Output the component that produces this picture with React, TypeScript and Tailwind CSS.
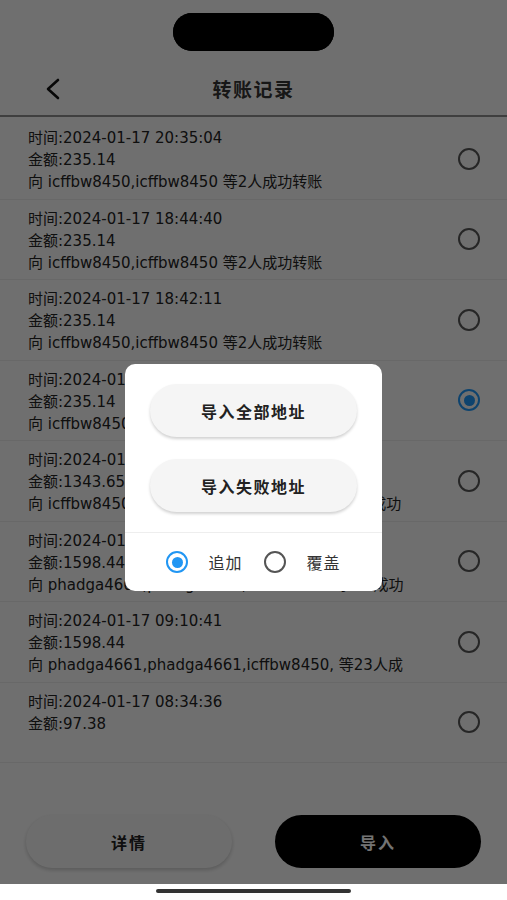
const FONT = "font-['DejaVu_Sans','Noto_Sans_CJK_SC',sans-serif]";
const CJK = "font-['Noto_Sans_CJK_SC',sans-serif]";

type Record = {
  time: string;
  amount: string;
  target?: string;
  selected?: boolean;
};

const RECORDS: Record[] = [
  { time: "2024-01-17 20:35:04", amount: "235.14", target: "向 icffbw8450,icffbw8450 等2人成功转账" },
  { time: "2024-01-17 18:44:40", amount: "235.14", target: "向 icffbw8450,icffbw8450 等2人成功转账" },
  { time: "2024-01-17 18:42:11", amount: "235.14", target: "向 icffbw8450,icffbw8450 等2人成功转账" },
  { time: "2024-01-17 16:20:35", amount: "235.14", target: "向 icffbw8450,icffbw8450 等2人成功转账", selected: true },
  { time: "2024-01-17 12:05:18", amount: "1343.65", target: "向 icffbw8450,phadga4661,icffbw8450 等12人成功转账" },
  { time: "2024-01-17 10:31:52", amount: "1598.44", target: "向 phadga4661,phadga4661,icffbw8450 等9人成功转账" },
  { time: "2024-01-17 09:10:41", amount: "1598.44", target: "向 phadga4661,phadga4661,icffbw8450, 等23人成功转账" },
  { time: "2024-01-17 08:34:36", amount: "97.38" },
];

function Radio({ checked }: { checked?: boolean }) {
  if (checked) {
    return (
      <span className="flex h-[22px] w-[22px] items-center justify-center rounded-full border-[2.5px] border-[#2196f3]">
        <span className="h-[11px] w-[11px] rounded-full bg-[#2196f3]" />
      </span>
    );
  }
  return <span className="h-[22px] w-[22px] rounded-full border-2 border-[#555]" />;
}

function RecordRow({ record }: { record: Record }) {
  return (
    <div className="flex h-[80.5px] items-center border-b border-[#e6e6e6] pl-[28px] pr-[27px]">
      <div className="flex h-full w-[384px] flex-col pt-[8px] text-[15px] leading-[22px] text-[#222]">
        <p>时间:{record.time}</p>
        <p>金额:{record.amount}</p>
        {record.target && <p className="h-[22px] overflow-hidden break-all">{record.target}</p>}
      </div>
      <div className="ml-auto flex">
        <Radio checked={record.selected} />
      </div>
    </div>
  );
}

function ImportDialog() {
  return (
    <div className={`absolute left-[125px] top-[364px] w-[257px] overflow-hidden rounded-[10px] bg-white ${CJK}`}>
      <div className="flex flex-col gap-[22px] px-[25px] pb-[20px] pt-[20px]">
        <button className="h-[53px] rounded-full bg-[#f5f5f5] text-[16px] font-bold tracking-[1.5px] text-[#222] shadow-[0_2px_3px_rgba(0,0,0,0.18)]">
          导入全部地址
        </button>
        <button className="h-[53px] rounded-full bg-[#f5f5f5] text-[16px] font-bold tracking-[1.5px] text-[#222] shadow-[0_2px_3px_rgba(0,0,0,0.18)]">
          导入失败地址
        </button>
      </div>
      <div className="flex h-[59px] items-center justify-center border-t border-[#eee] text-[16px] tracking-[1px] text-[#333]">
        <Radio checked />
        <span className="ml-[20px] mr-[21px]">追加</span>
        <Radio />
        <span className="ml-[21px]">覆盖</span>
      </div>
    </div>
  );
}

export default function App() {
  return (
    <div className={`relative h-[900px] w-full overflow-hidden bg-white ${FONT}`}>
      <div className="flex h-[884px] flex-col bg-[#f7f7f7]">
        <div className="flex h-[64px] justify-center pt-[13px]">
          <div className="h-[38px] w-[161px] rounded-full bg-black" />
        </div>
        <header className="relative flex h-[53px] items-center justify-center border-b-2 border-[#8c8c8c]">
          <svg
            className="absolute left-[43px] top-[13px]"
            width="20"
            height="24"
            viewBox="0 0 20 24"
            fill="none"
            stroke="#111"
            strokeWidth="2.6"
            strokeLinecap="round"
            strokeLinejoin="round"
          >
            <path d="M15 3 L5 12 L15 21" />
          </svg>
          <h1 className={`text-[19px] font-bold tracking-[1.5px] text-[#333] ${CJK}`}>转账记录</h1>
        </header>
        <div className="flex flex-col pt-[2px]">
          {RECORDS.map((r, i) => (
            <RecordRow key={i} record={r} />
          ))}
        </div>
        <div className={`mt-auto flex justify-between px-[26px] pb-[16px] ${CJK}`}>
          <button className="h-[53px] w-[206px] rounded-full bg-[#f2f2f2] text-[16px] font-bold tracking-[2px] text-[#222] shadow-[0_2px_4px_rgba(0,0,0,0.2)]">
            详情
          </button>
          <button className="h-[53px] w-[206px] rounded-full bg-black text-[16px] font-bold tracking-[2px] text-white">
            导入
          </button>
        </div>
      </div>
      <div className="flex h-[16px] justify-center pt-[5px]">
        <div className="h-[4px] w-[195px] rounded-full bg-[#333]" />
      </div>
      <div className="absolute left-0 top-0 h-[884px] w-full bg-black/55" />
      <div className="absolute left-[173px] top-[13px] h-[38px] w-[161px] rounded-full bg-black" />
      <ImportDialog />
    </div>
  );
}
